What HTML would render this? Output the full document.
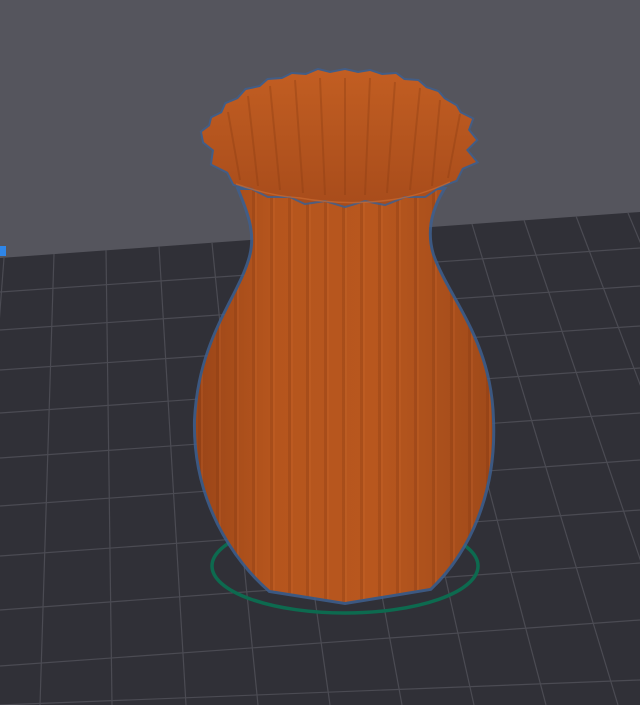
<!DOCTYPE html>
<html><head><style>html,body{margin:0;padding:0;background:#55555d;}svg{display:block}</style></head>
<body>
<svg width="640" height="705" viewBox="0 0 640 705" xmlns="http://www.w3.org/2000/svg">
<defs>
<linearGradient id="body" x1="0" x2="1" y1="0" y2="0">
<stop offset="0" stop-color="#9a4518"/><stop offset="0.25" stop-color="#b5551d"/><stop offset="0.6" stop-color="#b8571e"/><stop offset="1" stop-color="#a04a1a"/>
</linearGradient>
<pattern id="str" width="18" height="705" patternUnits="userSpaceOnUse">
<rect x="0" width="3" height="705" fill="#7a3510" opacity="0.25"/><rect x="3" width="2" height="705" fill="#d07030" opacity="0.2"/>
</pattern>
<linearGradient id="rim" x1="0" x2="0" y1="0" y2="1">
<stop offset="0" stop-color="#c25e22"/><stop offset="1" stop-color="#a84c1b"/>
</linearGradient>
</defs>
<rect width="640" height="705" fill="#55555d"/>
<polygon points="0,258 640,212 640,705 0,705" fill="#303037"/>
<g stroke="#4b4b53" stroke-width="1.2" fill="none">
<line x1="0" y1="292" x2="640" y2="248"/>
<line x1="0" y1="330" x2="640" y2="286"/>
<line x1="0" y1="370" x2="640" y2="326"/>
<line x1="0" y1="413" x2="640" y2="368"/>
<line x1="0" y1="458" x2="640" y2="413"/>
<line x1="0" y1="506" x2="640" y2="460"/>
<line x1="0" y1="556" x2="640" y2="510"/>
<line x1="0" y1="610" x2="640" y2="563"/>
<line x1="0" y1="666" x2="640" y2="620"/>
<line x1="0" y1="705" x2="640" y2="680"/>
<line x1="4" y1="258" x2="-30" y2="705"/>
<line x1="54" y1="254" x2="40" y2="705"/>
<line x1="106" y1="250" x2="112" y2="705"/>
<line x1="159" y1="246" x2="186" y2="705"/>
<line x1="212" y1="243" x2="258" y2="705"/>
<line x1="264" y1="239" x2="330" y2="705"/>
<line x1="316" y1="235" x2="402" y2="705"/>
<line x1="368" y1="232" x2="474" y2="705"/>
<line x1="420" y1="228" x2="546" y2="705"/>
<line x1="472" y1="224" x2="618" y2="705"/>
<line x1="524" y1="220" x2="690" y2="705"/>
<line x1="576" y1="216" x2="762" y2="705"/>
<line x1="628" y1="213" x2="834" y2="705"/>
</g>
<rect x="0" y="246" width="6" height="10" fill="#2f86e8"/>
<ellipse cx="345" cy="566" rx="133" ry="47" fill="none" stroke="#0d6a4f" stroke-width="3.5"/>
<path d="M240,190 C250,215 258,235 250,260 C238,300 200,340 196,420 C194,500 235,560 270,590 L345,602 L430,588 C470,550 495,490 492,420 C490,340 448,300 432,255 C425,232 430,210 442,190 Z" fill="#3f5f8e" stroke="#3f5f8e" stroke-width="6" opacity="0.85"/>
<path d="M240,190 C250,215 258,235 250,260 C238,300 200,340 196,420 C194,500 235,560 270,590 L345,602 L430,588 C470,550 495,490 492,420 C490,340 448,300 432,255 C425,232 430,210 442,190 Z" fill="url(#body)"/>
<path d="M240,190 C250,215 258,235 250,260 C238,300 200,340 196,420 C194,500 235,560 270,590 L345,602 L430,588 C470,550 495,490 492,420 C490,340 448,300 432,255 C425,232 430,210 442,190 Z" fill="url(#str)"/>
<path d="M202,132 L210,126 L212,118 L222,113 L226,104 L238,99 L246,90 L260,87 L268,80 L282,79 L292,74 L306,75 L318,70 L330,73 L345,70 L358,73 L370,71 L382,75 L396,74 L404,80 L418,81 L426,88 L438,92 L444,99 L456,106 L460,113 L472,119 L468,130 L476,140 L466,150 L476,162 L462,168 L456,180 L440,186 L425,196 L405,196 L385,204 L365,200 L345,206 L325,200 L305,203 L290,196 L268,196 L252,188 L234,184 L228,172 L212,164 L214,150 L204,142 Z" fill="#3f5f8e" stroke="#3f5f8e" stroke-width="4" opacity="0.85"/>
<path d="M202,132 L210,126 L212,118 L222,113 L226,104 L238,99 L246,90 L260,87 L268,80 L282,79 L292,74 L306,75 L318,70 L330,73 L345,70 L358,73 L370,71 L382,75 L396,74 L404,80 L418,81 L426,88 L438,92 L444,99 L456,106 L460,113 L472,119 L468,130 L476,140 L466,150 L476,162 L462,168 L456,180 L440,186 L425,196 L405,196 L385,204 L365,200 L345,206 L325,200 L305,203 L290,196 L268,196 L252,188 L234,184 L228,172 L212,164 L214,150 L204,142 Z" fill="url(#rim)"/>
<g stroke="#8a3c12" stroke-width="2" opacity="0.35" fill="none">
<path d="M345,78 L345,195"/><path d="M320,78 L325,195"/><path d="M370,78 L365,195"/>
<path d="M295,80 L303,193"/><path d="M395,82 L387,193"/><path d="M270,86 L280,190"/>
<path d="M420,88 L410,190"/><path d="M248,96 L258,186"/><path d="M440,100 L432,186"/>
<path d="M228,112 L240,180"/><path d="M460,114 L448,178"/>
</g>
<path d="M236,184 Q270,196 300,198 Q345,206 390,200 Q420,196 450,182" stroke="#c96a30" stroke-width="1.5" fill="none" opacity="0.7"/>
</svg>
</body></html>
